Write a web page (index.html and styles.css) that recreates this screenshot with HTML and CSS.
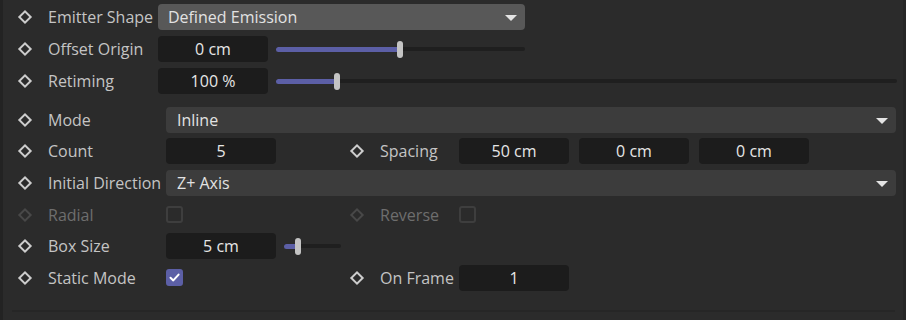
FILE: index.html
```html
<!DOCTYPE html>
<html lang="en">

<head>
    <meta charset="UTF-8">
    <title>Emitter Attributes</title>
    <link rel="stylesheet" href="styles.css">
</head>

<body>
    <div class="panel">
        <div class="section top">
            <div class="row">
                <span class="key"></span><span class="label">Emitter Shape</span>
                <div class="dropdown light short">Defined Emission<span class="arrow"></span></div>
            </div>
            <div class="row">
                <span class="key"></span><span class="label">Offset Origin</span>
                <div class="field">0 cm</div>
                <div class="slider short"><div class="fill" style="width: 124px"></div><div class="knob"></div></div>
            </div>
            <div class="row">
                <span class="key"></span><span class="label">Retiming</span>
                <div class="field">100 %</div>
                <div class="slider long"><div class="fill" style="width: 61px"></div><div class="knob"></div></div>
            </div>
        </div>

        <div class="section bottom">
            <div class="row">
                <span class="key"></span><span class="label">Mode</span>
                <div class="dropdown wide">Inline<span class="arrow"></span></div>
            </div>
            <div class="row">
                <span class="key"></span><span class="label">Count</span>
                <div class="field">5</div>
                <div class="pair">
                    <span class="key"></span><span class="label small">Spacing</span>
                    <div class="field">50 cm</div>
                    <div class="field">0 cm</div>
                    <div class="field">0 cm</div>
                </div>
            </div>
            <div class="row">
                <span class="key"></span><span class="label">Initial Direction</span>
                <div class="dropdown wide">Z+ Axis<span class="arrow"></span></div>
            </div>
            <div class="row dim">
                <span class="key"></span><span class="label">Radial</span>
                <div class="check-cell"><span class="check"></span></div>
                <div class="pair">
                    <span class="key"></span><span class="label small">Reverse</span>
                    <span class="check"></span>
                </div>
            </div>
            <div class="row">
                <span class="key"></span><span class="label">Box Size</span>
                <div class="field">5 cm</div>
                <div class="slider tiny"><div class="fill" style="width: 14px"></div><div class="knob"></div></div>
            </div>
            <div class="row">
                <span class="key"></span><span class="label">Static Mode</span>
                <div class="check-cell">
                    <span class="check on">
                        <svg width="13" height="13" viewBox="0 0 13 13"><path d="M2.5 6.8 L5.3 9.4 L10.6 3.6" fill="none" stroke="#fff" stroke-width="2" stroke-linecap="round" stroke-linejoin="round"/></svg>
                    </span>
                </div>
                <div class="pair">
                    <span class="key"></span><span class="label small">On Frame</span>
                    <div class="field">1</div>
                </div>
            </div>
        </div>
        <div class="rule"></div>
    </div>
</body>

</html>
```

FILE: styles.css
```css
body {
    margin: 0;
    width: 906px;
    height: 320px;
    background: #2b2b2b;
    font-family: "Open Sans", "Noto Sans", sans-serif;
    font-size: 16px;
    color: #c4c4c4;
    overflow: hidden;
}

.panel {
    height: 320px;
    border-left: 3px solid #232323;
    border-right: 3px solid #262626;
    box-sizing: border-box;
    padding-top: 1px;
}

.section {
    display: flex;
    flex-direction: column;
}

.top .row {
    height: 32px;
}

.bottom {
    margin-top: 7px;
}

.bottom .row {
    height: 31.6px;
}

.row {
    display: flex;
    align-items: center;
}

/* keyframe diamond */
.key {
    width: 6px;
    height: 6px;
    border: 2px solid #cdcdcd;
    transform: rotate(45deg);
    margin-left: 17px;
    margin-right: 18px;
    flex: none;
}

.label {
    width: 110px;
    white-space: nowrap;
}

.bottom .label {
    width: 118px;
}

.bottom .label.small {
    width: 79px;
}

.dropdown {
    position: relative;
    height: 26px;
    line-height: 26px;
    border-radius: 4px;
    background: #3c3c3c;
    color: #e2e2e2;
    padding-left: 11px;
    box-sizing: border-box;
}

.dropdown.light {
    background: #585858;
    padding-left: 10px;
}

.dropdown.short {
    width: 367px;
}

.dropdown.wide {
    width: 730px;
}

.arrow {
    position: absolute;
    right: 8px;
    top: 11px;
    border-left: 6px solid transparent;
    border-right: 6px solid transparent;
    border-top: 6px solid #e4e4e4;
}

.field {
    width: 110px;
    height: 26px;
    line-height: 26px;
    border-radius: 4px;
    background: #1c1c1c;
    color: #e6e6e6;
    text-align: center;
    flex: none;
}

.pair {
    display: flex;
    align-items: center;
    margin-left: 59px;
}

.pair .field + .field {
    margin-left: 10px;
}

.slider {
    position: relative;
    height: 4px;
    border-radius: 2px;
    background: #1f1f1f;
    margin-left: 8px;
    display: flex;
    align-items: center;
}

.slider.short {
    width: 249px;
}

.slider.long {
    width: 621px;
}

.slider.tiny {
    width: 57px;
}

.fill {
    height: 5px;
    border-radius: 3px 0 0 3px;
    background: #5c5fa6;
}

.knob {
    width: 6px;
    height: 17px;
    border-radius: 3px;
    background: #c4c4c4;
    margin-left: -3px;
}

.check-cell {
    width: 110px;
    display: flex;
    align-items: center;
}

.check {
    width: 17px;
    height: 17px;
    border: 2px solid #3e3e3e;
    border-radius: 3px;
    box-sizing: border-box;
    display: flex;
    align-items: center;
    justify-content: center;
}

.check.on {
    background: #5c5fa6;
    border-color: #5c5fa6;
}

.dim .label {
    color: #6e6e6e;
}

.dim .key {
    border-color: #484848;
}

.rule {
    margin: 16px 8px 0 9px;
    height: 2px;
    background: #262626;
}
```
